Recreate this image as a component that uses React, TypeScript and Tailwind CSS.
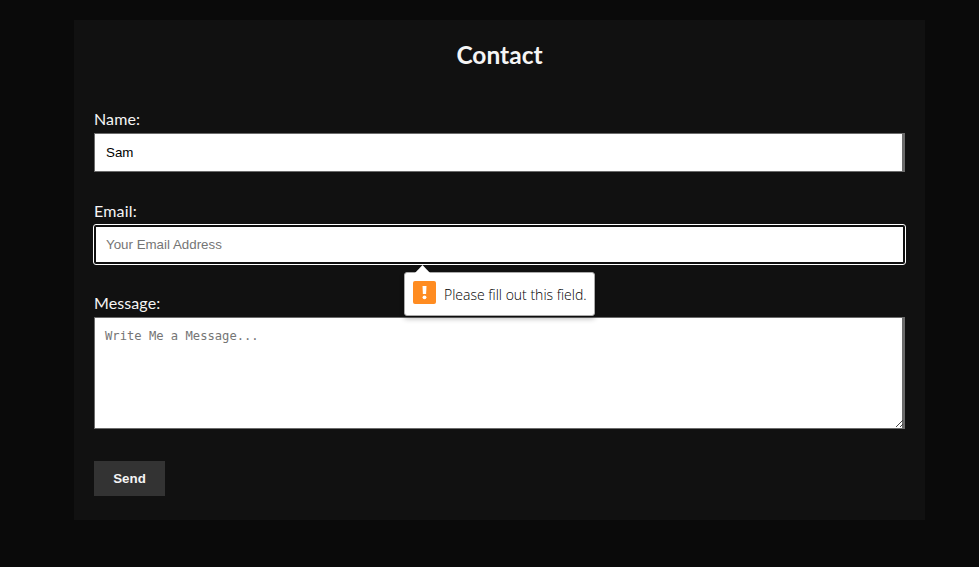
export default function App() {
  return (
    <div className="h-[567px] w-[979px] overflow-hidden bg-[#0a0a0a] pt-5 pl-[74px] font-['Lato',sans-serif] text-[#f5f5f5]">
      <main className="h-[500px] w-[851px] bg-[#111] px-5 pt-[17px]">
        <h1 className="mb-[36px] text-center text-[24.5px] leading-9 font-bold">Contact</h1>
        <form className="flex flex-col items-start" onSubmit={(e) => e.preventDefault()}>
          <label className="h-[24px] text-base leading-[19px] tracking-[0.1px]">Name:</label>
          <input defaultValue="Sam" className="mb-[29px] h-[39px] w-full border border-r-[3px] border-[#6b6b6b] bg-white px-[11px] pb-px font-['Liberation_Sans',sans-serif] text-[13.333px] text-black" />
          <label className="h-[24px] text-base leading-[19px] tracking-[0.2px]">Email:</label>
          <div className="relative mb-[29px] w-full">
            <input placeholder="Your Email Address" className="block h-[39px] w-full rounded-[2px] border-2 border-[#101010] bg-white px-[10px] pb-px font-['Liberation_Sans',sans-serif] text-[13.333px] outline outline-white placeholder:text-[#757575]" />
            <div className="absolute top-[47px] left-[310px] z-10 flex h-[44px] w-[191px] items-center rounded-[3px] border border-[#aaa] bg-white pl-2 font-['Open_Sans',sans-serif] text-[14px] font-light text-black shadow-[0_3px_5px_rgba(0,0,0,0.25)]">
              <svg className="absolute -top-2 left-[9px]" width="17" height="9"><path d="M0 9L8.5 0L17 9" fill="white" /></svg>
              <svg className="mb-1" width="23" height="23"><rect width="23" height="23" rx="2" fill="#ff8c21" /><path d="M9.5 5h4l-.4 8h-3.2z" fill="white" /><circle cx="11.5" cy="16.3" r="1.9" fill="white" /></svg>
              <span className="ml-2 whitespace-nowrap">Please fill out this field.</span>
            </div>
          </div>
          <label className="h-[24px] text-base leading-[19px] tracking-[0.1px]">Message:</label>
          <div className="relative mb-[32px] h-[112px] w-full">
            <textarea placeholder="Write Me a Message..." className="block h-full w-full resize-none border border-r-[3px] border-[#6b6b6b] bg-white px-[10px] py-[9px] font-['DejaVu_Sans_Mono',monospace] text-[12.17px] placeholder:text-[#757575]" />
            <svg className="absolute right-[2px] bottom-[2px]" width="7" height="7" fill="none" stroke="#333" strokeWidth="0.9"><path d="M0 7L7 0M4 7L7 4" /></svg>
          </div>
          <button className="h-[35px] w-[71px] bg-[#333] font-['Liberation_Sans',sans-serif] text-[13.333px] font-bold">Send</button>
        </form>
      </main>
    </div>
  );
}
